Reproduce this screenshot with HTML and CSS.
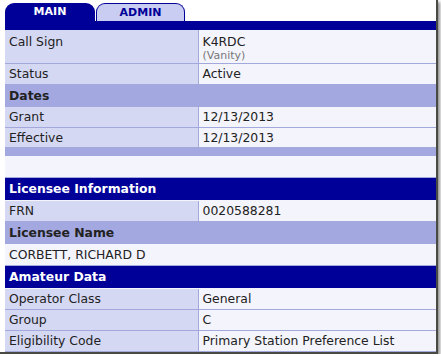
FILE: index.html
```html
<!DOCTYPE html>
<html>
<head>
  <meta charset="utf-8">
  <title>License Details</title>
  <link rel="stylesheet" href="styles.css">
</head>
<body>
  <div class="frame">
    <div class="tabs">
      <div class="tab tab-active">MAIN</div>
      <div class="tab tab-idle">ADMIN</div>
    </div>
    <div class="tab-bar"></div>

    <table class="license">
      <tr class="row-tall">
        <td class="label">Call Sign</td>
        <td class="value">K4RDC<div class="sub">(Vanity)</div></td>
      </tr>
      <tr>
        <td class="label">Status</td>
        <td class="value">Active</td>
      </tr>
      <tr class="head-light">
        <td colspan="2">Dates</td>
      </tr>
      <tr>
        <td class="label">Grant</td>
        <td class="value">12/13/2013</td>
      </tr>
      <tr class="row-short">
        <td class="label">Effective</td>
        <td class="value">12/13/2013</td>
      </tr>
      <tr class="spacer-band">
        <td colspan="2"></td>
      </tr>
      <tr class="blank">
        <td colspan="2"></td>
      </tr>
      <tr class="head-dark">
        <td colspan="2">Licensee Information</td>
      </tr>
      <tr>
        <td class="label">FRN</td>
        <td class="value">0020588281</td>
      </tr>
      <tr class="head-light">
        <td colspan="2">Licensee Name</td>
      </tr>
      <tr class="row-name">
        <td class="value" colspan="2">CORBETT, RICHARD D</td>
      </tr>
      <tr class="head-dark">
        <td colspan="2">Amateur Data</td>
      </tr>
      <tr>
        <td class="label">Operator Class</td>
        <td class="value">General</td>
      </tr>
      <tr>
        <td class="label">Group</td>
        <td class="value">C</td>
      </tr>
      <tr>
        <td class="label">Eligibility Code</td>
        <td class="value">Primary Station Preference List</td>
      </tr>
    </table>
  </div>
</body>
</html>
```

FILE: styles.css
```css
body {
  margin: 0;
  background: #ffffff;
  font-family: "DejaVu Sans", Verdana, sans-serif;
  font-size: 12.4px;
  color: #222222;
}

.frame {
  width: 431px;
  padding: 3px 0 0 5px;
  border-right: 2px solid #4a4a44;
  border-bottom: 2px solid #4a4a44;
  box-shadow: 2px 2px 3px rgba(0, 0, 0, 0.45);
  background: #ffffff;
}

.tabs {
  display: flex;
  gap: 1px;
  height: 18px;
}

.tab {
  width: 90px;
  box-sizing: border-box;
  border-radius: 9px 9px 0 0;
  font-size: 11px;
  font-weight: bold;
  text-align: center;
  line-height: 17px;
}

.tab-active {
  background: #000099;
  color: #ffffff;
}

.tab-idle {
  width: 89px;
  background: #c9cdf1;
  color: #000099;
  border: 1px solid #000099;
  border-bottom: none;
}

.tab-bar {
  height: 9px;
  background: #000099;
}

.license {
  width: 431px;
  border-collapse: collapse;
}

.license td {
  height: 20px;
  padding: 0 4px;
  border-bottom: 1px solid #a3a8dd;
  vertical-align: middle;
  box-sizing: border-box;
}

.label {
  width: 193px;
  background: #d5d8f3;
  border-right: 1px solid #a3a8dd;
}

.value {
  background: #f4f4fc;
}

.row-tall td {
  height: 33px;
  vertical-align: top;
  padding-top: 4px;
}

.row-short td {
  height: 20px;
}

.row-name td {
  height: 22px;
}

.sub {
  font-size: 11px;
  color: #777777;
  line-height: 13px;
}

.head-light td {
  height: 22px;
  background: #a3a8e0;
  font-weight: bold;
}

.head-dark td {
  height: 23px;
  background: #000099;
  color: #ffffff;
  font-weight: bold;
  border-bottom: 1px solid #f4f4fc;
}

.spacer-band td {
  height: 9px;
  padding: 0;
  background: #a3a8e0;
  border-bottom: none;
}

.blank td {
  height: 21px;
  background: #f4f4fc;
}

.license tr:not([class]) td {
  height: 21px;
}
```
